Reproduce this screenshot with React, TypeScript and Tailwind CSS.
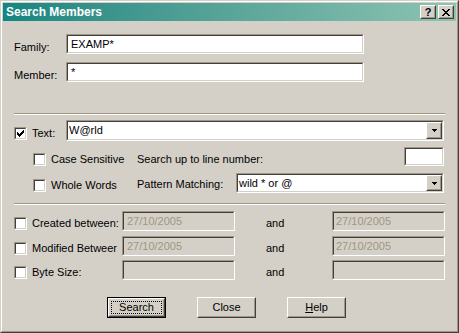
import type { ReactNode } from 'react';

const FONT = { fontFamily: '"Liberation Sans", Arial, sans-serif' };

// sunken 2px edge used by edits, combos and check boxes
function Sunken({ className, inner, children }: { className: string; inner: string; children?: ReactNode }) {
  return (
    <div className={`border border-t-[#a09682] border-l-[#a09682] border-r-white border-b-white ${className}`}>
      <div className={`h-full w-full border border-t-[#404040] border-l-[#404040] border-r-[#d4d0c8] border-b-[#d4d0c8] ${inner}`}>
        {children}
      </div>
    </div>
  );
}

// raised 2px edge used by buttons
function Raised({ className, children }: { className: string; children?: ReactNode }) {
  return (
    <div className={`border border-t-white border-l-white border-r-[#404040] border-b-[#404040] ${className}`}>
      <div className="h-full w-full border border-t-[#d4d0c8] border-l-[#d4d0c8] border-r-[#a09682] border-b-[#a09682] bg-[#d4d0c8] flex items-center justify-center">
        {children}
      </div>
    </div>
  );
}

function Check({ checked = false }: { checked?: boolean }) {
  return (
    <Sunken className="w-[13px] h-[13px] shrink-0" inner="bg-white relative">
      {checked && (
        <svg width="7" height="7" viewBox="0 0 7 7" className="absolute left-[1px] top-[1px]" shapeRendering="crispEdges">
          <rect x="0" y="2" width="1" height="3" fill="#000" />
          <rect x="1" y="3" width="1" height="3" fill="#000" />
          <rect x="2" y="4" width="1" height="3" fill="#000" />
          <rect x="3" y="3" width="1" height="3" fill="#000" />
          <rect x="4" y="2" width="1" height="3" fill="#000" />
          <rect x="5" y="1" width="1" height="3" fill="#000" />
          <rect x="6" y="0" width="1" height="3" fill="#000" />
        </svg>
      )}
    </Sunken>
  );
}

function Combo({ className, value }: { className: string; value: string }) {
  return (
    <Sunken className={className} inner="bg-white flex items-stretch">
      <div className="flex-1 flex items-center pl-[1px] text-[11px] text-black leading-none">{value}</div>
      <Raised className="w-[16px]">
        <svg width="5" height="3" viewBox="0 0 5 3" shapeRendering="crispEdges">
          <rect x="0" y="0" width="5" height="1" fill="#000" />
          <rect x="1" y="1" width="3" height="1" fill="#000" />
          <rect x="2" y="2" width="1" height="1" fill="#000" />
        </svg>
      </Raised>
    </Sunken>
  );
}

function Separator() {
  return <div className="w-[431px] h-0 border-t border-t-[#a09682] border-b border-b-white" />;
}

function DateRow({ label, from, to, className }: { label: string; from: string; to: string; className: string }) {
  return (
    <div className={`flex h-[20px] ${className}`}>
      <div className="w-[108px] flex items-center gap-[5px] pt-[5px]">
        <Check />
        <span>{label}</span>
      </div>
      <Sunken className="w-[113px] h-[20px]" inner="bg-[#d4d0c8] flex items-center pl-[3px] text-[#a09682]">
        {from}
      </Sunken>
      <div className="w-[97px] pl-[31px] flex items-center pt-[5px]">and</div>
      <Sunken className="w-[113px] h-[20px]" inner="bg-[#d4d0c8] flex items-center pl-[2px] text-[#a09682]">
        {to}
      </Sunken>
    </div>
  );
}

export default function App() {
  return (
    <div className="w-[459px] h-[333px] text-[11px] text-black leading-none select-none" style={FONT}>
      <div className="h-full border border-t-[#d4d0c8] border-l-[#d4d0c8] border-r-[#404040] border-b-[#404040]">
        <div className="h-full border border-t-white border-l-white border-r-[#a09682] border-b-[#a09682] bg-[#d4d0c8] p-[1px] flex flex-col">
          {/* title bar */}
          <div className="h-[18px] bg-gradient-to-r from-[#128681] to-[#8cc4b2] flex items-center pl-[3px] pr-[2px]">
            <span className="flex-1 text-white font-bold text-[12px]">Search Members</span>
            <Raised className="w-[16px] h-[14px]">
              <span className="font-bold text-[11px] leading-none">?</span>
            </Raised>
            <Raised className="w-[16px] h-[14px] ml-[2px]">
              <svg width="8" height="7" viewBox="0 0 8 7" shapeRendering="crispEdges">
                <path d="M0 0h2v1H0zM6 0h2v1H6zM1 1h2v1H1zM5 1h2v1H5zM2 2h4v1H2zM3 3h2v1H3zM2 4h4v1H2zM1 5h2v1H1zM5 5h2v1H5zM0 6h2v1H0zM6 6h2v1H6z" fill="#000" />
              </svg>
            </Raised>
          </div>

          <div className="flex flex-col pl-[11px]">
            <div className="flex h-[20px] mt-[13px]">
              <div className="w-[52px] flex items-center pt-[6px]">Family:</div>
              <Sunken className="w-[298px] h-[20px]" inner="bg-white flex items-center pl-[3px]">EXAMP*</Sunken>
            </div>
            <div className="flex h-[20px] mt-[8px]">
              <div className="w-[52px] flex items-center pt-[6px]">Member:</div>
              <Sunken className="w-[298px] h-[20px]" inner="bg-white flex items-center pl-[3px]">*</Sunken>
            </div>

            <div className="mt-[31px]">
              <Separator />
            </div>

            <div className="flex h-[21px] mt-[5px]">
              <div className="w-[52px] flex items-center gap-[5px] pt-[5px]">
                <Check checked />
                <span>Text:</span>
              </div>
              <Combo className="w-[378px] h-[21px]" value="W@rld" />
            </div>

            <div className="flex h-[19px] mt-[6px]">
              <div className="w-[123px] pl-[19px] flex items-center gap-[5px] pt-[5px]">
                <Check />
                <span>Case Sensitive</span>
              </div>
              <div className="w-[267px] flex items-center pt-[5px]">Search up to line number:</div>
              <Sunken className="w-[40px] h-[19px]" inner="bg-white" />
            </div>

            <div className="flex h-[20px] mt-[7px]">
              <div className="w-[123px] pl-[19px] flex items-center gap-[5px] pt-[5px]">
                <Check />
                <span>Whole Words</span>
              </div>
              <div className="w-[99px] flex items-center pt-[3px]">Pattern Matching:</div>
              <Combo className="w-[208px] h-[20px]" value="wild * or @" />
            </div>

            <div className="mt-[10px]">
              <Separator />
            </div>

            <DateRow className="mt-[6px]" label="Created between:" from="27/10/2005" to="27/10/2005" />
            <DateRow className="mt-[5px]" label="Modified Betweer" from="27/10/2005" to="27/10/2005" />
            <DateRow className="mt-[4px]" label="Byte Size:" from="" to="" />

            <div className="flex mt-[17px] ml-[93px] gap-[31px]">
              <div className="w-[59px] h-[21px] border border-black">
                <Raised className="w-full h-full">
                  <span className="w-[51px] h-[13px] flex items-center justify-center border border-dotted border-black">
                    Search
                  </span>
                </Raised>
              </div>
              <Raised className="w-[59px] h-[21px]">
                <span>Close</span>
              </Raised>
              <Raised className="w-[59px] h-[21px]">
                <span>
                  <span className="underline">H</span>elp
                </span>
              </Raised>
            </div>
          </div>
        </div>
      </div>
    </div>
  );
}
